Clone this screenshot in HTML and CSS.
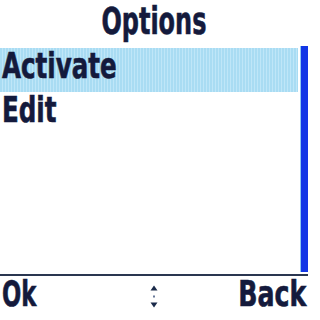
FILE: index.html
```html
<!DOCTYPE html>
<html>
<head>
<meta charset="utf-8">
<link rel="stylesheet" href="styles.css">
</head>
<body>
<div class="screen">
  <header class="title"><span class="txt c">Options</span></header>
  <div class="menu">
    <ul class="list">
      <li class="item sel"><span class="txt">Activate</span></li>
      <li class="item"><span class="txt">Edit</span></li>
    </ul>
    <div class="scroll"><div class="thumb"></div></div>
  </div>
  <div class="divider"></div>
  <footer class="softkeys">
    <span class="sk left"><span class="txt ok">Ok</span></span>
    <svg class="nav" width="10" height="28" viewBox="0 0 10 28">
      <path d="M5 1.5 L8.5 6.5 L1.5 6.5 Z" fill="#1a2a4a"/>
      <rect x="4" y="11.5" width="2" height="2" fill="#6a7a9a"/>
      <path d="M1.5 18.5 L8.5 18.5 L5 23.5 Z" fill="#1a2a4a"/>
    </svg>
    <span class="sk right"><span class="txt r">Back</span></span>
  </footer>
</div>
</body>
</html>
```
FILE: styles.css
```css
html, body {
  margin: 0;
  padding: 0;
  background: #ffffff;
}
.screen {
  width: 308px;
  height: 320px;
  display: flex;
  flex-direction: column;
  overflow: hidden;
  font-family: "DejaVu Sans Condensed", "DejaVu Sans", sans-serif;
  font-stretch: condensed;
  font-weight: bold;
  color: #141a3c;
  -webkit-text-stroke: 0.6px #141a3c;
}
.txt {
  display: inline-block;
  transform: scaleX(0.78);
  transform-origin: left center;
  white-space: nowrap;
}
.txt.c { transform: scaleX(0.72); transform-origin: center center; }
.txt.r { transform: scaleX(0.78); transform-origin: right center; }
.txt.ok { transform: scaleX(0.7); }
.title {
  height: 46px;
  box-sizing: border-box;
  padding-top: 0;
  font-size: 37px;
  line-height: 43px;
  text-align: center;
}
.menu {
  height: 228px;
  display: flex;
}
.list {
  flex: 1;
  list-style: none;
  margin: 0;
  padding: 2px 2px 0 0;
}
.item {
  height: 44px;
  box-sizing: border-box;
  padding: 0 0 8px 2px;
  font-size: 35px;
  line-height: 36px;
}
.item.sel {
  background: repeating-linear-gradient(90deg, #a9dcf3 0 2px, #bfe6f8 2px 3px);
}
.scroll {
  width: 8px;
  padding-bottom: 2px;
  box-sizing: border-box;
  display: flex;
}
.thumb {
  flex: 1;
  background: #1236e6;
  border-left: 1px solid #8ec8f0;
}
.divider {
  height: 2px;
  background: #2a3650;
}
.softkeys {
  flex: 1;
  display: flex;
  align-items: flex-start;
  justify-content: space-between;
  padding: 0 2px 0 2px;
  font-size: 36px;
  line-height: 36px;
}
.sk { width: 90px; }
.sk.right { text-align: right; }
.nav { margin-top: 8px; }
```
